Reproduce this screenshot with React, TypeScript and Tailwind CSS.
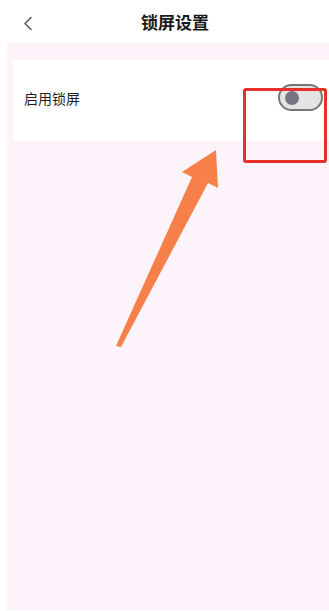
import React from "react";

export default function App() {
  return (
    <div
      className="relative w-[329px] h-[611px] bg-white overflow-hidden"
      style={{ fontFamily: '"Noto Sans CJK SC", "Noto Sans", sans-serif' }}
    >
      <div className="h-[43px] relative flex items-center justify-center">
        <svg
          className="absolute left-[23px] top-[16px]"
          width="10"
          height="15"
          viewBox="0 0 10 15"
          fill="none"
        >
          <path d="M8 1.5 L2 7.5 L8 13.5" stroke="#555" strokeWidth="1.5" strokeLinecap="round" strokeLinejoin="round" />
        </svg>
        <span className="text-[17px] font-bold text-[#1a1a1a] pl-[21px] leading-none">锁屏设置</span>
      </div>
      <div className="ml-[7px] h-[567px] bg-[#fcf4fa] pt-[17px] pl-[6px]">
        <div className="h-[81px] bg-white flex items-start pt-[24px] pl-[11px] pr-[6px]">
          <div className="flex-1 h-[27px] flex items-center text-[14px] text-[#1f1f1f] leading-none">启用锁屏</div>
          <div className="w-[45px] h-[27px] rounded-full border-[2px] border-[#777] bg-[#e4e4e4] flex items-center pl-[5px]">
            <div className="w-[14px] h-[14px] rounded-full bg-[#777380]" />
          </div>
        </div>
      </div>
      <div className="absolute left-[243px] top-[88px] w-[84px] h-[75px] border-[3px] border-[#e8302a] rounded-[3px]" />
      <svg className="absolute left-0 top-0" width="329" height="611" viewBox="0 0 329 611">
        <polygon
          points="216,150 218,188 208,183 121,347 116,346 192,177 182,172"
          fill="#f7804a"
        />
      </svg>
    </div>
  );
}
